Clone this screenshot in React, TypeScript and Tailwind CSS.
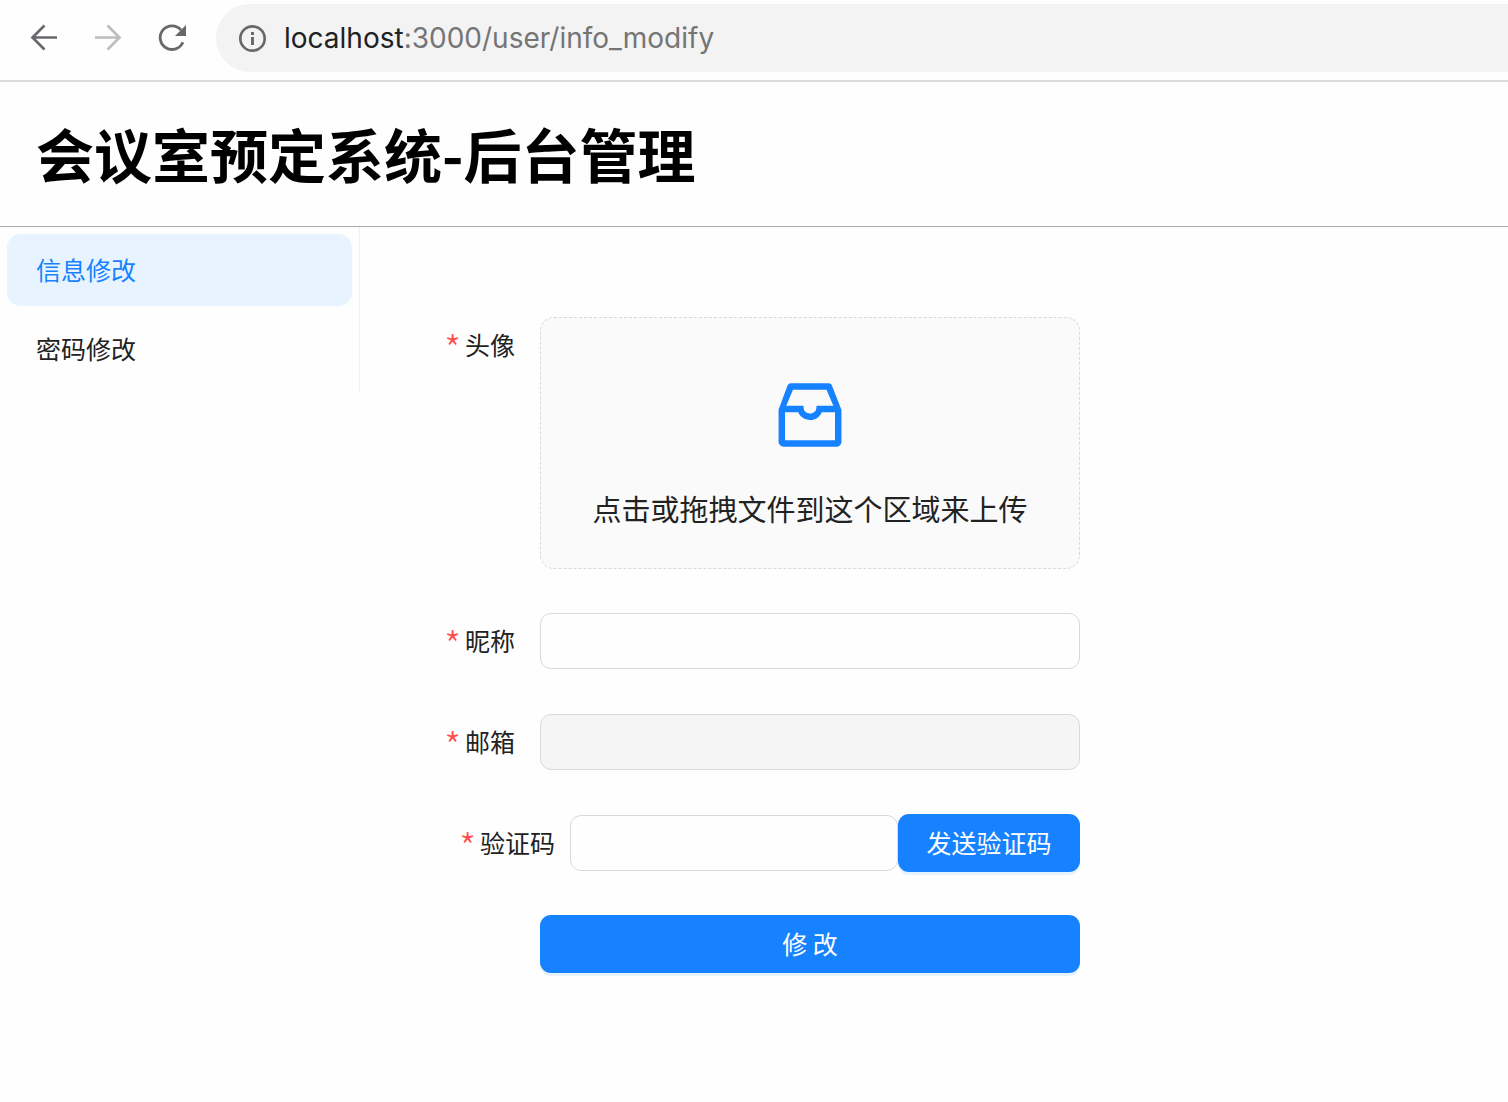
import { useState } from "react";
import type { ReactNode } from "react";
import { AiOutlineInbox } from "react-icons/ai";

const menuItems = [
  { key: "info_modify", label: "信息修改" },
  { key: "password_modify", label: "密码修改" },
];

const inputClass =
  "h-14 w-full min-w-0 rounded-[11px] border border-[#d9d9d9] bg-[#fefefe] px-5 text-[25px] outline-none focus:border-[#1782ff] disabled:bg-[#f5f5f5]";

const buttonClass =
  "h-[58px] rounded-[11px] bg-[#1782ff] pb-0.5 text-[25px] leading-[40px] text-white shadow-[0_3px_0_rgba(5,145,255,0.1)]";

function BrowserBar() {
  return (
    <div className="flex h-[82px] items-start border-b-2 border-[#dcdcdc] pl-7 pt-1">
      <div className="flex h-[68px] items-center gap-8 pr-7 text-[#66686c]">
        <button type="button" aria-label="后退">
          <svg className="size-8" viewBox="0 0 32 32" fill="none" stroke="currentColor" strokeWidth="2.7">
            <path d="M29 15.5H4.5M16.5 3.5l-12 12 12 12" />
          </svg>
        </button>
        <button type="button" aria-label="前进" className="text-[#bdbdbf]">
          <svg className="size-8" viewBox="0 0 32 32" fill="none" stroke="currentColor" strokeWidth="2.7">
            <path d="M3 15.5h24.5M15.5 3.5l12 12-12 12" />
          </svg>
        </button>
        <button type="button" aria-label="刷新">
          <svg className="size-8" viewBox="0 0 32 32" fill="none">
            <path d="M26.9 20.2A11.8 11.8 0 1 1 25 8" stroke="currentColor" strokeWidth="2.8" />
            <path d="M30 3v11H19z" fill="currentColor" />
          </svg>
        </button>
      </div>
      <div className="flex h-[68px] min-w-0 flex-1 items-center gap-4 rounded-l-full bg-[#f3f3f3] pl-5">
        <svg className="size-8 shrink-0 text-[#66686c]" viewBox="0 0 32 32" fill="none">
          <circle cx="16.5" cy="16.5" r="12.2" stroke="currentColor" strokeWidth="2.7" />
          <path d="M16.5 15v8M16.5 10v3" stroke="currentColor" strokeWidth="2.9" />
        </svg>
        <div className="truncate font-['Inter','Liberation_Sans',sans-serif] text-[28px] text-[#757575]">
          <span className="text-[#202124]">localhost</span>:3000/user/info_modify
        </div>
      </div>
    </div>
  );
}

function FieldLabel({ htmlFor, wide, children }: { htmlFor: string; wide?: boolean; children: ReactNode }) {
  return (
    <label
      htmlFor={htmlFor}
      className={`flex h-14 shrink-0 items-center justify-end gap-1 pb-0.5 ${wide ? "w-[210px] pr-[15px]" : "w-[180px] pr-[25px]"}`}
    >
      <span className="pt-2 text-[38px] font-light text-[#ff4d4f]">*</span>
      {children}
    </label>
  );
}

export default function App() {
  const [active, setActive] = useState("info_modify");

  return (
    <div className="min-h-screen bg-[#fefefe] font-['Noto_Sans_CJK_SC',sans-serif] text-[25px] leading-[40px] text-[#222222]">
      <BrowserBar />

      <header className="flex h-[145px] items-center border-b border-[#aaaaaa] px-9 pb-0.5">
        <h1 className="text-[58px] font-bold leading-[80px] text-black">会议室预定系统-后台管理</h1>
      </header>

      <div className="flex items-start">
        <nav className="flex w-[360px] shrink-0 flex-col gap-[7px] border-r border-[#f0f0f0] p-[7px]">
          {menuItems.map((item) => (
            <a
              key={item.key}
              href={`#${item.key}`}
              onClick={() => setActive(item.key)}
              className={`flex h-[72px] items-center rounded-[14px] px-[29px] pb-0.5 ${active === item.key ? "bg-[#e7f4ff] text-[#1782ff]" : ""}`}
            >
              {item.label}
            </a>
          ))}
        </nav>

        <main className="w-full max-w-[720px] pt-[90px]">
          <form className="flex flex-col gap-[43px]" onSubmit={(e) => e.preventDefault()}>
            <div className="flex">
              <FieldLabel htmlFor="headPic">头像</FieldLabel>
              <label className="relative flex h-[252px] flex-1 cursor-pointer flex-col items-center rounded-[14px] border border-dashed border-[#d9d9d9] bg-[#fafafa] pt-[54px]">
                <AiOutlineInbox className="size-[86px] text-[#1782ff]" />
                <span className="mt-[30px] text-[29px]">点击或拖拽文件到这个区域来上传</span>
                <input id="headPic" type="file" className="sr-only" />
              </label>
            </div>

            <div className="flex h-[58px] items-center">
              <FieldLabel htmlFor="nickName">昵称</FieldLabel>
              <input id="nickName" type="text" className={inputClass} />
            </div>

            <div className="flex h-[58px] items-center">
              <FieldLabel htmlFor="email">邮箱</FieldLabel>
              <input id="email" type="email" disabled className={inputClass} />
            </div>

            <div className="flex h-[58px] items-center">
              <FieldLabel htmlFor="captcha" wide>验证码</FieldLabel>
              <input id="captcha" type="text" className={inputClass} />
              <button type="button" className={`w-[182px] shrink-0 ${buttonClass}`}>发送验证码</button>
            </div>

            <button type="submit" className={`ml-[180px] ${buttonClass}`}>修 改</button>
          </form>
        </main>
      </div>
    </div>
  );
}
